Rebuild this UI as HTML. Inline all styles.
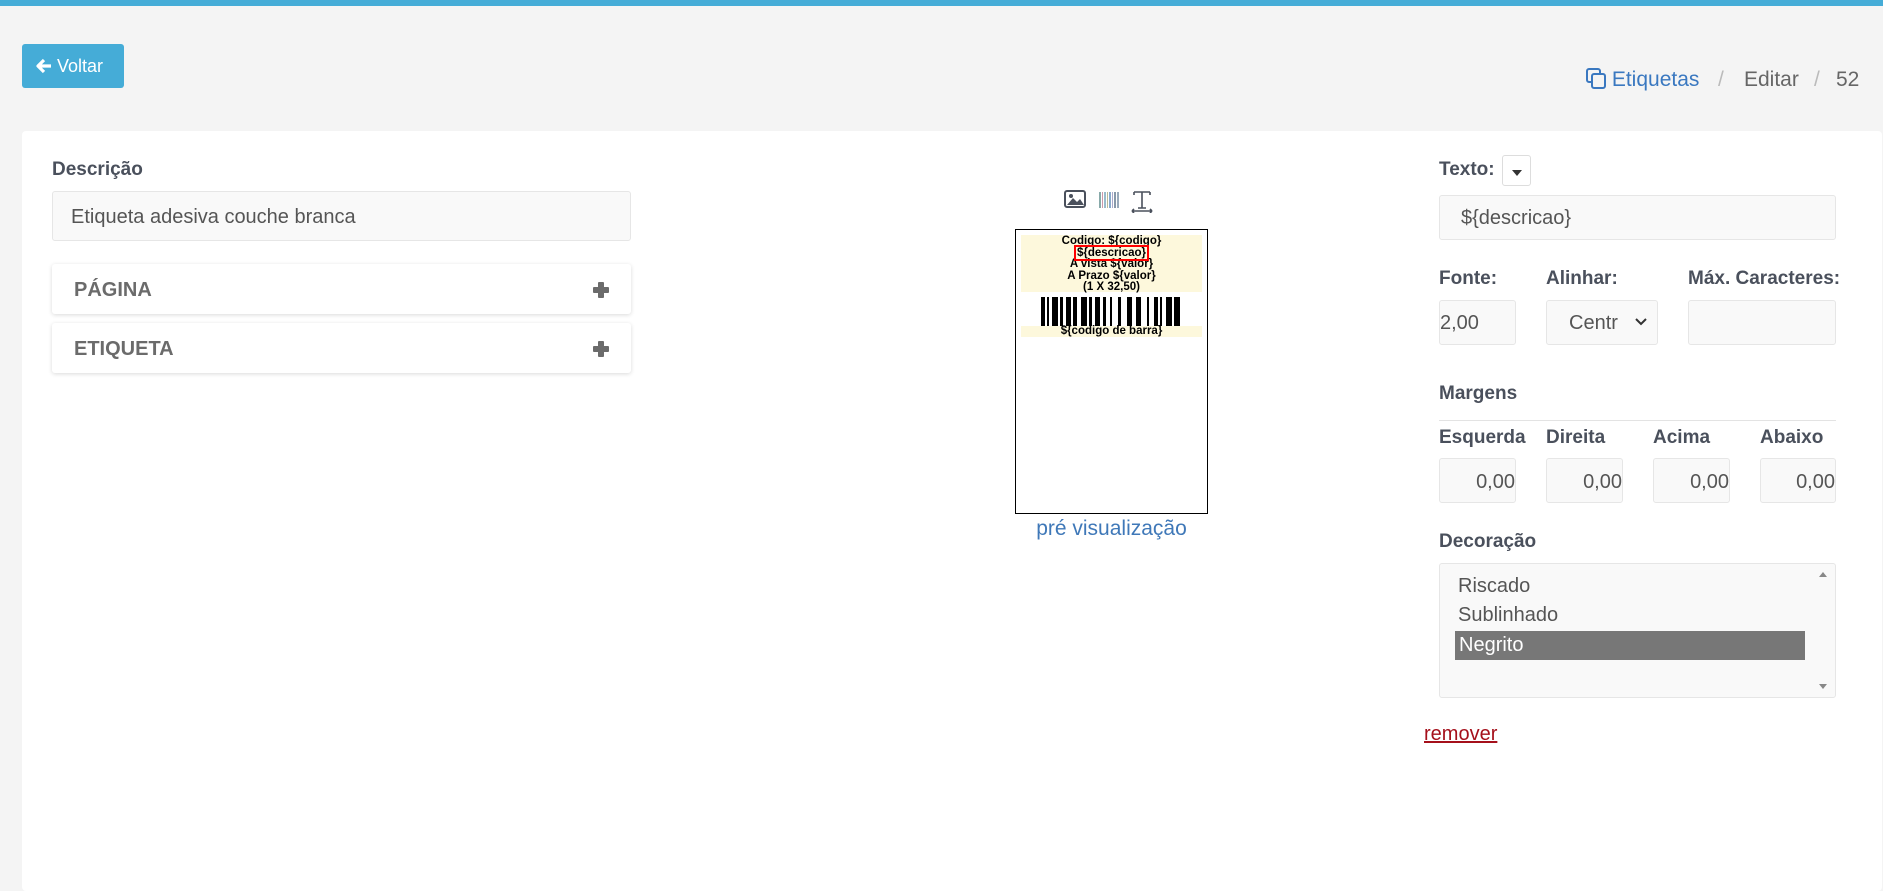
<!DOCTYPE html>
<html><head><meta charset="utf-8"><style>
*{box-sizing:border-box;margin:0;padding:0}
body{width:1883px;height:878px;background:#f4f4f4;font-family:"Liberation Sans",sans-serif;position:relative;overflow:hidden;color:#555}
.a{position:absolute}
.top{left:0;top:0;width:1883px;height:6px;background:#45acd7}
.btn{left:22px;top:44px;width:102px;height:44px;background:#45acd7;border-radius:3px;color:#fff;font-size:18px;line-height:44px;padding-left:14px;white-space:nowrap}
.card{left:22px;top:131px;width:1860px;height:760px;background:#fff;border-radius:4px}
.lbl{font-weight:bold;color:#4a505c;font-size:19px;white-space:nowrap}
.inp{background:#f9f9f9;border:1px solid #e6e6e6;border-radius:3px;font-size:20px;color:#555}
.panel{left:52px;width:579px;height:50px;background:#fff;box-shadow:0 1px 4px rgba(0,0,0,.15);border-radius:3px;font-weight:bold;font-size:20px;color:#6b6b6b;line-height:52px;padding-left:22px}
.panel i{position:absolute;right:22px;top:18px;width:16px;height:16px}
.panel i:before{content:"";position:absolute;left:5px;top:0;width:6px;height:16px;background:#6b6b6b;border-radius:1px}
.panel i:after{content:"";position:absolute;left:0;top:5px;width:16px;height:6px;background:#6b6b6b;border-radius:1px}
.bc{top:68px;font-size:21px;color:#666}
</style></head><body>
<div class="a top"></div>
<div class="a btn"><svg width="16" height="16" viewBox="0 0 16 16" style="vertical-align:-2px"><path d="M8 2 L2 8 L8 14 M2 8 H15" stroke="#fff" stroke-width="3.2" fill="none" stroke-linejoin="round"/></svg> Voltar</div>
<div class="a bc" style="left:1586px;color:#3a78c0">
<svg width="20" height="21" viewBox="0 0 20 21" style="vertical-align:-3px"><rect x="1" y="1" width="13" height="13" rx="2" fill="none" stroke="#3a78c0" stroke-width="2"/><rect x="6" y="6" width="13" height="14" rx="2" fill="#f4f4f4" stroke="#3a78c0" stroke-width="2"/></svg> Etiquetas</div>
<div class="a bc" style="left:1718px;color:#bbb">/</div>
<div class="a bc" style="left:1744px">Editar</div>
<div class="a bc" style="left:1814px;color:#bbb">/</div>
<div class="a bc" style="left:1836px">52</div>
<div class="a card"></div>
<div class="a lbl" style="left:52px;top:159px">Descrição</div>
<div class="a inp" style="left:52px;top:191px;width:579px;height:50px;line-height:50px;padding-left:18px">Etiqueta adesiva couche branca</div>
<div class="a panel" style="top:264px">PÁGINA<i></i></div>
<div class="a panel" style="top:323px">ETIQUETA<i></i></div>
<!-- middle -->
<svg class="a" style="left:1064px;top:189px" width="90" height="24" viewBox="0 0 90 24">
<rect x="1" y="2" width="20" height="16" rx="2" fill="none" stroke="#4a505c" stroke-width="2"/><path d="M3 16 L9 9 L13 13 L16 10 L20 16Z" fill="#4a505c"/><circle cx="7" cy="7" r="2" fill="#4a505c"/>
<g fill="#8aa"><rect x="35" y="3" width="2" height="16"/><rect x="38" y="3" width="1" height="16" fill="#c9a"/><rect x="40" y="3" width="2" height="16" fill="#9bc"/><rect x="43" y="3" width="1" height="16" fill="#bb9"/><rect x="45" y="3" width="2" height="16" fill="#8ac"/><rect x="48" y="3" width="1" height="16" fill="#aac"/><rect x="50" y="3" width="2" height="16" fill="#89a"/><rect x="53" y="3" width="2" height="16" fill="#9ab"/></g>
<path d="M70 3 H86 M70 3 V6 M86 3 V6 M78 3 V19 M74 19 H82 M68 22 H88 M68 22 l2-2 M68 22 l2 2 M88 22 l-2-2 M88 22 l-2 2" stroke="#4a505c" stroke-width="1.6" fill="none"/>
</svg>
<div class="a" style="left:1015px;top:229px;width:193px;height:285px;border:1.5px solid #000;background:#fff"></div>
<div class="a" style="left:1021px;top:235px;width:181px;height:57px;background:#fdf8dc;text-align:center;font-weight:bold;font-size:11.5px;line-height:11.5px;color:#000;padding-top:1px">Codigo: ${codigo}<br><span style="outline:2px solid red;padding:0 1px">${descricao}</span><br>A vista ${valor}<br>A Prazo ${valor}<br>(1 X 32,50)</div>
<svg class="a" style="left:1041px;top:297px" width="142" height="29"><g fill="#000">
<rect x="0" width="4" height="29"/><rect x="6" width="2" height="29"/><rect x="11" width="6" height="29"/><rect x="19" width="3" height="29"/><rect x="25" width="5" height="29"/><rect x="32" width="4" height="29"/><rect x="40" width="6" height="29"/><rect x="48" width="3" height="29"/><rect x="54" width="5" height="29"/><rect x="62" width="3" height="29"/><rect x="69" width="2" height="29"/><rect x="77" width="3" height="29"/><rect x="86" width="5" height="29"/><rect x="95" width="5" height="29"/><rect x="106" width="2" height="29"/><rect x="113" width="4" height="29"/><rect x="119" width="2" height="29"/><rect x="125" width="6" height="29"/><rect x="133" width="6" height="29"/></g></svg>
<div class="a" style="left:1021px;top:326px;width:181px;height:11px;background:#fdf8dc;text-align:center;font-weight:bold;font-size:11.5px;line-height:11px;color:#000">${codigo de barra}</div>
<div class="a" style="left:1005px;top:517px;width:213px;text-align:center;font-size:21px;color:#3f78b8">pré visualização</div>
<!-- right -->
<div class="a lbl" style="left:1439px;top:159px">Texto:</div>
<div class="a" style="left:1502px;top:155px;width:29px;height:31px;border:1px solid #ddd;border-radius:3px"><div style="margin:14px 0 0 9px;width:0;height:0;border-left:5px solid transparent;border-right:5px solid transparent;border-top:6px solid #333"></div></div>
<div class="a inp" style="left:1439px;top:195px;width:397px;height:45px;line-height:45px;padding-left:21px">${descricao}</div>
<div class="a lbl" style="left:1439px;top:268px">Fonte:</div>
<div class="a lbl" style="left:1546px;top:268px">Alinhar:</div>
<div class="a lbl" style="left:1688px;top:268px">Máx. Caracteres:</div>
<div class="a inp" style="left:1439px;top:300px;width:77px;height:45px;line-height:45px">2,00</div>
<div class="a inp" style="left:1546px;top:300px;width:112px;height:45px;line-height:45px;padding-left:22px">Centr<svg style="position:absolute;right:10px;top:17px" width="12" height="8"><path d="M1 1 L6 6 L11 1" stroke="#333" stroke-width="2" fill="none"/></svg></div>
<div class="a inp" style="left:1688px;top:300px;width:148px;height:45px"></div>
<div class="a lbl" style="left:1439px;top:383px">Margens</div>
<div class="a" style="left:1439px;top:420px;width:397px;height:1px;background:#e3e3e3"></div>
<div class="a lbl" style="left:1439px;top:427px">Esquerda</div>
<div class="a lbl" style="left:1546px;top:427px">Direita</div>
<div class="a lbl" style="left:1653px;top:427px">Acima</div>
<div class="a lbl" style="left:1760px;top:427px">Abaixo</div>
<div class="a inp" style="left:1439px;top:458px;width:77px;height:45px;line-height:46px;text-align:right">0,00</div>
<div class="a inp" style="left:1546px;top:458px;width:77px;height:45px;line-height:46px;text-align:right">0,00</div>
<div class="a inp" style="left:1653px;top:458px;width:77px;height:45px;line-height:46px;text-align:right">0,00</div>
<div class="a inp" style="left:1760px;top:458px;width:76px;height:45px;line-height:46px;text-align:right">0,00</div>
<div class="a lbl" style="left:1439px;top:531px">Decoração</div>
<div class="a inp" style="left:1439px;top:563px;width:397px;height:135px">
<div style="position:absolute;left:18px;top:8px;line-height:29px">Riscado<br>Sublinhado</div>
<div style="position:absolute;left:15px;top:67px;width:350px;height:29px;background:#777;color:#fff;line-height:29px;padding-left:4px">Negrito</div>
<div style="position:absolute;right:8px;top:8px;border-left:4px solid transparent;border-right:4px solid transparent;border-bottom:5px solid #888"></div>
<div style="position:absolute;right:8px;bottom:8px;border-left:4px solid transparent;border-right:4px solid transparent;border-top:5px solid #888"></div>
</div>
<div class="a" style="left:1424px;top:723px;font-size:20px;color:#a5101b;text-decoration:underline">remover</div>
</body></html>
